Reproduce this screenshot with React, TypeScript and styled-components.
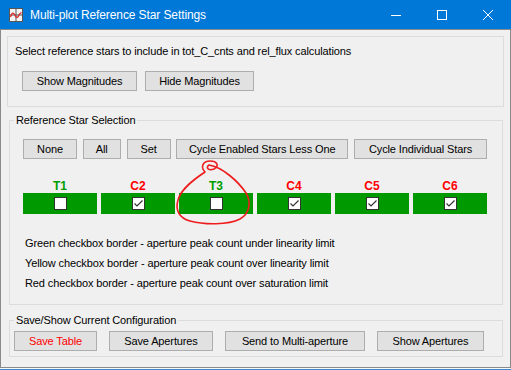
import React from "react";
import styled, { createGlobalStyle } from "styled-components";

type Star = { name: string; kind: "T" | "C"; checked: boolean };

const stars: Star[] = [
  { name: "T1", kind: "T", checked: false },
  { name: "C2", kind: "C", checked: true },
  { name: "T3", kind: "T", checked: false },
  { name: "C4", kind: "C", checked: true },
  { name: "C5", kind: "C", checked: true },
  { name: "C6", kind: "C", checked: true },
];

const legendLines = [
  "Green checkbox border - aperture peak count under linearity limit",
  "Yellow checkbox border - aperture peak count over linearity limit",
  "Red checkbox border - aperture peak count over saturation limit",
];

const GlobalStyle = createGlobalStyle`
  html, body {
    margin: 0;
    padding: 0;
    background: #ffffff;
  }
  body {
    font-family: "Liberation Sans", Arial, sans-serif;
    font-size: 11px;
    letter-spacing: -0.12px;
    color: #000;
  }
`;

const Screen = styled.div`
  position: relative;
  width: 511px;
  height: 370px;
  overflow: hidden;
  display: flex;
  flex-direction: column;
`;

const TitleBar = styled.div`
  height: 29px;
  background: #0078d7;
  display: flex;
  align-items: center;
  color: #fff;
`;

const AppIcon = styled.svg`
  margin-left: 9px;
  flex: none;
`;

const Title = styled.span`
  margin-left: 7px;
  font-size: 12px;
  letter-spacing: -0.1px;
  flex: 1;
  white-space: nowrap;
`;

const Control = styled.div`
  width: 46px;
  height: 29px;
  display: flex;
  align-items: center;
  justify-content: center;
`;

const Client = styled.div`
  height: 339px;
  box-sizing: border-box;
  border: 1px solid #8a8a8a;
  background: #f0f0f0;
  display: flex;
  flex-direction: column;
`;

const TopGroup = styled.div`
  margin: 6px 6px 0 6px;
  height: 71px;
  box-sizing: border-box;
  border: 1px solid #dcdcdc;
  padding: 7px 0 0 7px;
`;

const Line = styled.div`
  height: 14px;
  line-height: 14px;
  white-space: nowrap;
`;

const ButtonRow = styled.div<{ $gap: number; $indent?: number; $spread?: boolean }>`
  display: flex;
  gap: ${(p) => p.$gap}px;
  margin-left: ${(p) => p.$indent ?? 0}px;
  justify-content: ${(p) => (p.$spread ? "space-between" : "flex-start")};
`;

const Button = styled.button<{ $w: number; $danger?: boolean }>`
  width: ${(p) => p.$w}px;
  height: 20px;
  box-sizing: border-box;
  padding: 0;
  border: 1px solid #adadad;
  background: #e1e1e1;
  font-family: "Liberation Sans", Arial, sans-serif;
  font-size: 11px;
  letter-spacing: -0.12px;
  color: ${(p) => (p.$danger ? "#ff0000" : "#000")};
  white-space: nowrap;
  flex: none;
`;

const Lower = styled.div`
  display: flex;
  flex-direction: column;
  margin: 0 7px 0 8px;
`;

const Group = styled.fieldset<{ $top: number }>`
  margin: ${(p) => p.$top}px 0 0 0;
  padding: 0;
  border: 1px solid #dcdcdc;
  min-width: 0;
`;

const GroupTitle = styled.legend`
  margin-left: 4px;
  padding: 0 2px;
  height: 14px;
  line-height: 14px;
  font-size: 11px;
  white-space: nowrap;
`;

const SelectionBody = styled.div`
  padding: 12px 0 11px 13px;
  width: 464px;
`;

const StarGrid = styled.div`
  display: grid;
  grid-template-columns: repeat(6, 74px);
  column-gap: 4px;
`;

const StarLabels = styled(StarGrid)`
  margin-top: 20px;
`;

const StarLabel = styled.div<{ $kind: "T" | "C" }>`
  height: 14px;
  line-height: 14px;
  text-align: center;
  font-weight: bold;
  font-size: 12px;
  letter-spacing: 0;
  color: ${(p) => (p.$kind === "T" ? "#009c00" : "#ff0000")};
`;

const StarBar = styled.div`
  height: 21px;
  background: #009900;
  display: flex;
  align-items: center;
  justify-content: center;
`;

const CheckBox = styled.div`
  width: 13px;
  height: 13px;
  box-sizing: border-box;
  border: 1px solid #333;
  background: #fff;
  display: flex;
`;

const LegendList = styled.div`
  margin: 19px 0 0 2px;
`;

const LegendLine = styled.div`
  height: 20px;
  line-height: 20px;
  white-space: nowrap;
`;

const SaveBody = styled.div`
  padding: 4px 0 5px 4px;
`;

const Backdrop = styled.div`
  height: 2px;
  background: #f7f7f7;
  border-bottom: 1px solid #3a8ad0;
  box-sizing: border-box;
`;

const Scribble = styled.svg`
  position: absolute;
  left: 0;
  top: 0;
  pointer-events: none;
`;

const Check = () => (
  <svg width="11" height="11" viewBox="0 0 11 11">
    <polyline points="1.5,5.5 4,8 9.5,2.5" fill="none" stroke="#333" strokeWidth="1.2" />
  </svg>
);

export default function App() {
  return (
    <>
      <GlobalStyle />
      <Screen>
        <TitleBar>
          <AppIcon width="14" height="14" viewBox="0 0 14 14">
            <rect x="0.5" y="0.5" width="13" height="13" fill="#f4f4f4" stroke="#555" />
            <line x1="7" y1="1" x2="7" y2="13" stroke="#555" />
            <line x1="1" y1="7" x2="13" y2="7" stroke="#555" />
            <path d="M1.5,9 C3,4 4.5,4 6,7.5 C7.5,10.5 9,10 10.5,6 L12.5,4.5" fill="none" stroke="#e02020" strokeWidth="1.2" />
          </AppIcon>
          <Title>Multi-plot Reference Star Settings</Title>
          <Control>
            <svg width="10" height="10" viewBox="0 0 10 10">
              <line x1="0" y1="5.5" x2="10" y2="5.5" stroke="#fff" />
            </svg>
          </Control>
          <Control>
            <svg width="10" height="10" viewBox="0 0 10 10">
              <rect x="0.5" y="0.5" width="9" height="9" fill="none" stroke="#fff" />
            </svg>
          </Control>
          <Control>
            <svg width="10" height="10" viewBox="0 0 10 10">
              <path d="M0,0 L10,10 M10,0 L0,10" stroke="#fff" strokeWidth="1" />
            </svg>
          </Control>
        </TitleBar>

        <Client>
          <TopGroup>
            <Line>Select reference stars to include in tot_C_cnts and rel_flux calculations</Line>
            <ButtonRow $gap={8} $indent={7} style={{ marginTop: 13 }}>
              <Button $w={115}>Show Magnitudes</Button>
              <Button $w={109}>Hide Magnitudes</Button>
            </ButtonRow>
          </TopGroup>

          <Lower>
            <Group $top={6}>
              <GroupTitle>Reference Star Selection</GroupTitle>
              <SelectionBody>
                <ButtonRow $gap={4} $spread>
                  <Button $w={54}>None</Button>
                  <Button $w={38}>All</Button>
                  <Button $w={44}>Set</Button>
                  <Button $w={172}>Cycle Enabled Stars Less One</Button>
                  <Button $w={133}>Cycle Individual Stars</Button>
                </ButtonRow>
                <StarLabels>
                  {stars.map((s) => (
                    <StarLabel key={s.name} $kind={s.kind}>
                      {s.name}
                    </StarLabel>
                  ))}
                </StarLabels>
                <StarGrid>
                  {stars.map((s) => (
                    <StarBar key={s.name}>
                      <CheckBox>{s.checked && <Check />}</CheckBox>
                    </StarBar>
                  ))}
                </StarGrid>
                <LegendList>
                  {legendLines.map((l) => (
                    <LegendLine key={l}>{l}</LegendLine>
                  ))}
                </LegendList>
              </SelectionBody>
            </Group>

            <Group $top={8}>
              <GroupTitle>Save/Show Current Configuration</GroupTitle>
              <SaveBody>
                <ButtonRow $gap={12}>
                  <Button $w={83} $danger>
                    Save Table
                  </Button>
                  <Button $w={104}>Save Apertures</Button>
                  <Button $w={140}>Send to Multi-aperture</Button>
                  <Button $w={107}>Show Apertures</Button>
                </ButtonRow>
              </SaveBody>
            </Group>
          </Lower>
        </Client>
        <Backdrop />

        <Scribble width="511" height="370" viewBox="0 0 511 370">
          <path
            d="M205,172 C200,167 203,161 210,161 C217,161 220,166 214,169 C209,171 205,168 209,165 C222,167 238,181 246,193 C252,203 249,214 240,219 C228,225 205,225 190,221 C179,218 175,210 178,200 C181,189 193,180 205,172"
            fill="none"
            stroke="#ee1c1c"
            strokeWidth="1.6"
            strokeLinecap="round"
          />
        </Scribble>
      </Screen>
    </>
  );
}
